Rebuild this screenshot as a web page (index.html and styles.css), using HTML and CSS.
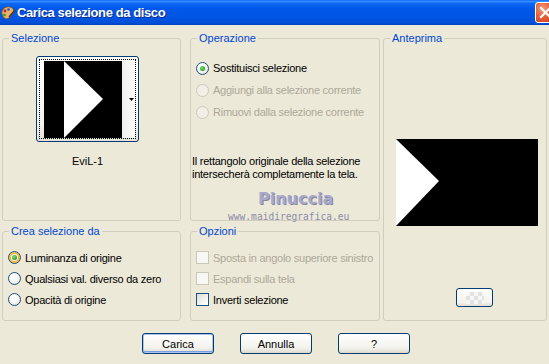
FILE: index.html
```html
<!DOCTYPE html>
<html>
    <head>
        <title>Carica selezione da disco</title>
        <link rel="stylesheet" href="styles.css">
    </head>
    <body>
        <div class="window">
            <div class="titlebar">
                <svg class="app-icon" width="16" height="16" viewBox="0 0 16 16">
                    <path d="M2 9 C1 4 6 1 10 2 C14 3 15 7 12 9 C10 10 11 12 9 13 C6 15 3 13 2 9 Z" fill="#e9b26a" stroke="#7a4a1c" stroke-width="0.8"/>
                    <circle cx="5" cy="6" r="1.4" fill="#d02020"/>
                    <circle cx="8.5" cy="4.5" r="1.3" fill="#2050d0"/>
                    <circle cx="4.5" cy="10" r="1.3" fill="#20a030"/>
                    <path d="M9 12 L15 5" stroke="#5a3a10" stroke-width="1.6"/>
                </svg>
                <span class="title">Carica selezione da disco</span>
                <span class="close-btn">
                    <svg width="19" height="19" viewBox="0 0 19 19">
                        <path d="M5 5 L14 14 M14 5 L5 14" stroke="#fff" stroke-width="2.2" stroke-linecap="square"/>
                    </svg>
                </span>
            </div>

            <div class="panels">
                <fieldset class="group g-sel">
                    <legend>Selezione</legend>
                    <div class="thumb-btn">
                        <div class="thumb-focus">
                            <svg class="thumb-img" width="78" height="77" viewBox="0 0 78 77">
                                <rect width="78" height="77" fill="#000"/>
                                <polygon points="20,0 59,38 20,77" fill="#fff"/>
                            </svg>
                            <div class="thumb-drop">
                                <svg width="5" height="3" viewBox="0 0 5 3"><polygon points="0,0 5,0 2.5,3" fill="#000"/></svg>
                            </div>
                        </div>
                    </div>
                    <div class="thumb-name">EviL-1</div>
                </fieldset>

                <fieldset class="group g-op">
                    <legend>Operazione</legend>
                    <div class="opt-list op-list">
                        <div class="opt"><span class="radio checked"></span>Sostituisci selezione</div>
                        <div class="opt disabled"><span class="radio"></span>Aggiungi alla selezione corrente</div>
                        <div class="opt disabled"><span class="radio"></span>Rimuovi dalla selezione corrente</div>
                    </div>
                    <p class="note">Il rettangolo originale della selezione<br>intersecherà completamente la tela.</p>
                </fieldset>

                <fieldset class="group g-prev">
                    <legend>Anteprima</legend>
                    <svg class="preview" width="142" height="87" viewBox="0 0 142 87">
                        <rect width="142" height="87" fill="#000"/>
                        <polygon points="0,0 43,42 0,87" fill="#fff"/>
                    </svg>
                    <div class="small-btn"><span class="checker"></span></div>
                </fieldset>

                <fieldset class="group g-crea">
                    <legend>Crea selezione da</legend>
                    <div class="opt-list">
                        <div class="opt"><span class="radio checked hot"></span>Luminanza di origine</div>
                        <div class="opt"><span class="radio"></span>Qualsiasi val. diverso da zero</div>
                        <div class="opt"><span class="radio"></span>Opacità di origine</div>
                    </div>
                </fieldset>

                <fieldset class="group g-opt">
                    <legend>Opzioni</legend>
                    <div class="opt-list">
                        <div class="opt disabled"><span class="check"></span>Sposta in angolo superiore sinistro</div>
                        <div class="opt disabled"><span class="check"></span>Espandi sulla tela</div>
                        <div class="opt"><span class="check"></span>Inverti selezione</div>
                    </div>
                </fieldset>
            </div>

            <div class="buttons">
                <div class="btn default">Carica</div>
                <div class="btn">Annulla</div>
                <div class="btn">?</div>
            </div>

            <div class="watermark">
                <span class="wm-name">Pinuccia</span>
                <span class="wm-site">www.maidiregrafica.eu</span>
            </div>
        </div>
    </body>
</html>
```

FILE: styles.css
```css
body {
    margin: 0;
    background-color: #ece9d8;
    font-family: "Liberation Sans", Arial, sans-serif;
    font-size: 11px;
    color: #000;
}
.window {
    position: relative;
    width: 549px;
    height: 364px;
    overflow: hidden;
}

/* title bar */
.titlebar {
    height: 25px;
    display: flex;
    align-items: center;
    background: linear-gradient(to bottom, #0a5ff0 0%, #3a8fff 5%, #0c68f4 14%, #0057e8 35%, #0055e4 70%, #004fd8 90%, #0044c4 100%);
    color: #fff;
}
.app-icon {
    margin-left: 0;
    flex: none;
}
.title {
    margin-left: 1px;
    font-size: 13px;
    font-weight: bold;
    letter-spacing: -0.4px;
    text-shadow: 1px 1px 0 #0a2a8c;
    flex: 1;
}
.close-btn {
    width: 19px;
    height: 19px;
    margin-right: -7px;
    border: 1px solid #fff;
    border-radius: 3px;
    background: radial-gradient(circle at 35% 30%, #f39a7c 0%, #e5603b 45%, #c8391a 100%);
    display: flex;
}

/* group boxes */
.panels {
    display: grid;
    grid-template-columns: 179px 9px 190px 3px 164px;
    grid-template-rows: 189px 96px;
    row-gap: 4px;
    margin: 7px 0 0 2px;
}
.group {
    margin: 0;
    padding: 0;
    min-width: 0;
    border: 1px solid #d0cebf;
    border-radius: 3px;
}
.group legend {
    margin-left: 6px;
    padding: 0 2px;
    line-height: 13px;
    color: #0046d5;
}
.g-sel { grid-column: 1; grid-row: 1; }
.g-op { grid-column: 3; grid-row: 1; position: relative; }
.g-prev { grid-column: 5; grid-row: 1 / 3; }
.g-crea { grid-column: 1; grid-row: 2; }
.g-opt { grid-column: 3; grid-row: 2; }

/* selection thumbnail */
.thumb-btn {
    box-sizing: border-box;
    width: 103px;
    height: 86px;
    margin: 11px 0 0 33px;
    padding: 2px;
    border: 1px solid #003c74;
    border-radius: 3px;
    background: linear-gradient(to bottom, #ffffff, #f4f3ee 80%, #e3e0d6);
}
.thumb-focus {
    height: 100%;
    box-sizing: border-box;
    border: 1px dotted #000;
    padding: 1px 0 0 4px;
    display: flex;
}
.thumb-img {
    display: block;
    flex: none;
}
.thumb-drop {
    flex: 1;
    display: flex;
    align-items: center;
    justify-content: flex-end;
    padding-right: 1px;
    background: linear-gradient(to right, #f0f0ec, #fbfbf9);
}
.thumb-drop svg {
    display: block;
}
.thumb-name {
    width: 103px;
    margin: 13px 0 0 33px;
    text-align: center;
    line-height: 13px;
}

/* options */
.opt-list {
    display: flex;
    flex-direction: column;
    margin: 9px 0 0 5px;
}
.op-list {
    margin-top: 12px;
}
.opt {
    height: 21px;
    display: flex;
    align-items: center;
    gap: 4px;
    letter-spacing: -0.25px;
}
.op-list .opt {
    height: 22px;
}
.opt.disabled {
    color: #aca899;
}
.radio {
    box-sizing: border-box;
    width: 13px;
    height: 13px;
    border-radius: 50%;
    border: 1px solid #1c5180;
    background: radial-gradient(circle at 40% 35%, #ffffff 30%, #e8e6dc 75%, #d6d3c6 100%);
    display: flex;
    align-items: center;
    justify-content: center;
    flex: none;
}
.radio.hot {
    box-shadow: inset 0 0 0 2px #f8b636;
}
.radio.checked::after {
    content: "";
    width: 5px;
    height: 5px;
    border-radius: 50%;
    background: radial-gradient(circle at 40% 40%, #7ce37c, #21a121 70%, #1a8a1a);
}
.disabled .radio {
    border-color: #cac8bb;
    background: #f2f0e6;
}
.check {
    box-sizing: border-box;
    width: 13px;
    height: 13px;
    border: 1px solid #1c5180;
    background: linear-gradient(135deg, #dcdcd7, #ffffff 90%);
    flex: none;
}
.disabled .check {
    border-color: #cac8bb;
    background: #f8f8f2;
}
.note {
    margin: 32px 0 0 1px;
    line-height: 13px;
    letter-spacing: -0.25px;
}

/* preview */
.preview {
    display: block;
    margin: 94px 0 0 12px;
}
.small-btn {
    box-sizing: border-box;
    width: 37px;
    height: 19px;
    margin: 62px 0 0 72px;
    border: 1px solid #003c74;
    border-radius: 3px;
    background: linear-gradient(to bottom, #ffffff, #f3f2ec 80%, #e0ddd2);
    display: flex;
    align-items: center;
    justify-content: center;
}
.checker {
    width: 18px;
    height: 12px;
    background-color: #f6f6f6;
    background-image: linear-gradient(45deg, #e2e2e2 25%, transparent 25%, transparent 75%, #e2e2e2 75%),
                      linear-gradient(45deg, #e2e2e2 25%, transparent 25%, transparent 75%, #e2e2e2 75%);
    background-size: 8px 8px;
    background-position: 0 0, 4px 4px;
}

/* buttons */
.buttons {
    display: flex;
    justify-content: center;
    gap: 26px;
    margin-top: 12px;
    padding-left: 3px;
}
.btn {
    box-sizing: border-box;
    width: 72px;
    height: 21px;
    border: 1px solid #003c74;
    border-radius: 3px;
    background: linear-gradient(to bottom, #ffffff, #f4f3ee 70%, #e3e0d4 95%, #d6d0c5);
    display: flex;
    align-items: center;
    justify-content: center;
}
.btn.default {
    box-shadow: inset 0 0 0 1px #a9c5f0, inset 0 -1px 0 1px #7a9fe0;
}

/* watermark */
.watermark {
    position: absolute;
    left: 228px;
    top: 189px;
    display: flex;
    flex-direction: column;
    pointer-events: none;
}
.wm-name {
    margin-left: 30px;
    font-family: "DejaVu Sans", sans-serif;
    font-weight: bold;
    font-size: 16px;
    line-height: 20px;
    color: #a8a8ca;
    text-shadow: 1px 1px 0 #8585a6;
}
.wm-site {
    margin-top: 2px;
    font-family: "DejaVu Sans Mono", monospace;
    font-size: 9.6px;
    line-height: 12px;
    color: #8c8ca8;
}
```
